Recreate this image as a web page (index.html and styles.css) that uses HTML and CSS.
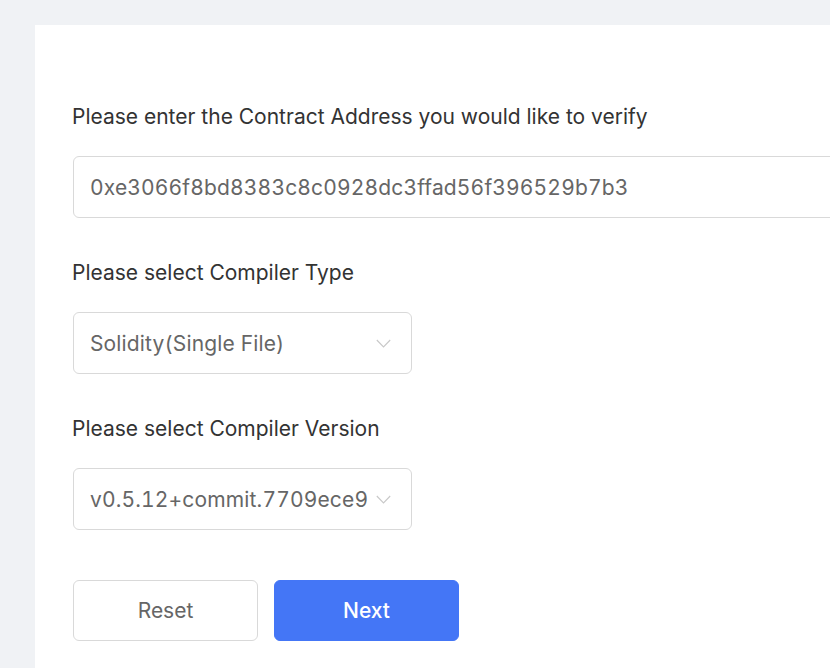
FILE: index.html
```html
<!DOCTYPE html>
<html>
<head>
<meta charset="utf-8">
<link rel="stylesheet" href="styles.css">
</head>
<body>
<div class="card">
  <form class="form">
    <div class="field">
      <div class="label">Please enter the Contract Address you would like to verify</div>
      <div class="input wide">0xe3066f8bd8383c8c0928dc3ffad56f396529b7b3</div>
    </div>
    <div class="field">
      <div class="label">Please select Compiler Type</div>
      <div class="input select"><span>Solidity(Single File)</span>
        <svg class="chev" width="15" height="9" viewBox="0 0 15 9"><path d="M0.8 1 L7.5 8 L14.2 1" fill="none" stroke="#c8c8c8" stroke-width="1.1"/></svg>
      </div>
    </div>
    <div class="field">
      <div class="label">Please select Compiler Version</div>
      <div class="input select"><span>v0.5.12+commit.7709ece9</span>
        <svg class="chev" width="15" height="9" viewBox="0 0 15 9"><path d="M0.8 1 L7.5 8 L14.2 1" fill="none" stroke="#c8c8c8" stroke-width="1.1"/></svg>
      </div>
    </div>
    <div class="buttons">
      <button type="button" class="btn reset">Reset</button>
      <button type="button" class="btn next">Next</button>
    </div>
  </form>
</div>
</body>
</html>
```
FILE: styles.css
```css
html, body {
  margin: 0;
  padding: 0;
  background: #f0f2f5;
  overflow: hidden;
  height: 668px;
}
body {
  padding: 25px 0 0 35px;
  font-family: Inter, "Noto Sans", sans-serif;
}
.card {
  background: #fff;
  width: 795px;
  height: 643px;
  padding: 77px 0 0 37px;
  box-sizing: border-box;
  overflow: hidden;
}
.form {
  display: flex;
  flex-direction: column;
}
.field {
  display: flex;
  flex-direction: column;
  gap: 26px;
  margin-bottom: 40px;
}
.label {
  font-size: 21px;
  line-height: 28px;
  padding-top: 1px;
  margin-bottom: -1px;
  color: #333;
}
.input {
  height: 62px;
  box-sizing: border-box;
  border: 1px solid #d9d9d9;
  border-radius: 6px;
  padding: 1px 16px 0;
  display: flex;
  align-items: center;
  font-size: 21px;
  color: #666;
  margin-left: 1px;
  font-variant-numeric: tabular-nums;
  letter-spacing: 0.15px;
  white-space: nowrap;
}
.wide { width: 820px; }
.select {
  width: 339px;
  justify-content: space-between;
  padding-right: 20px;
}
.chev { flex: none; }
.buttons {
  display: flex;
  gap: 16px;
  margin-top: 10px;
  margin-left: 1px;
}
.btn {
  width: 185px;
  height: 61px;
  border-radius: 6px;
  font-family: inherit;
  font-size: 21px;
  cursor: pointer;
}
.reset {
  background: #fff;
  border: 1px solid #d9d9d9;
  color: #666;
}
.next {
  background: #4476f6;
  border: 1px solid #4476f6;
  color: #fff;
  font-weight: 500;
}
```
